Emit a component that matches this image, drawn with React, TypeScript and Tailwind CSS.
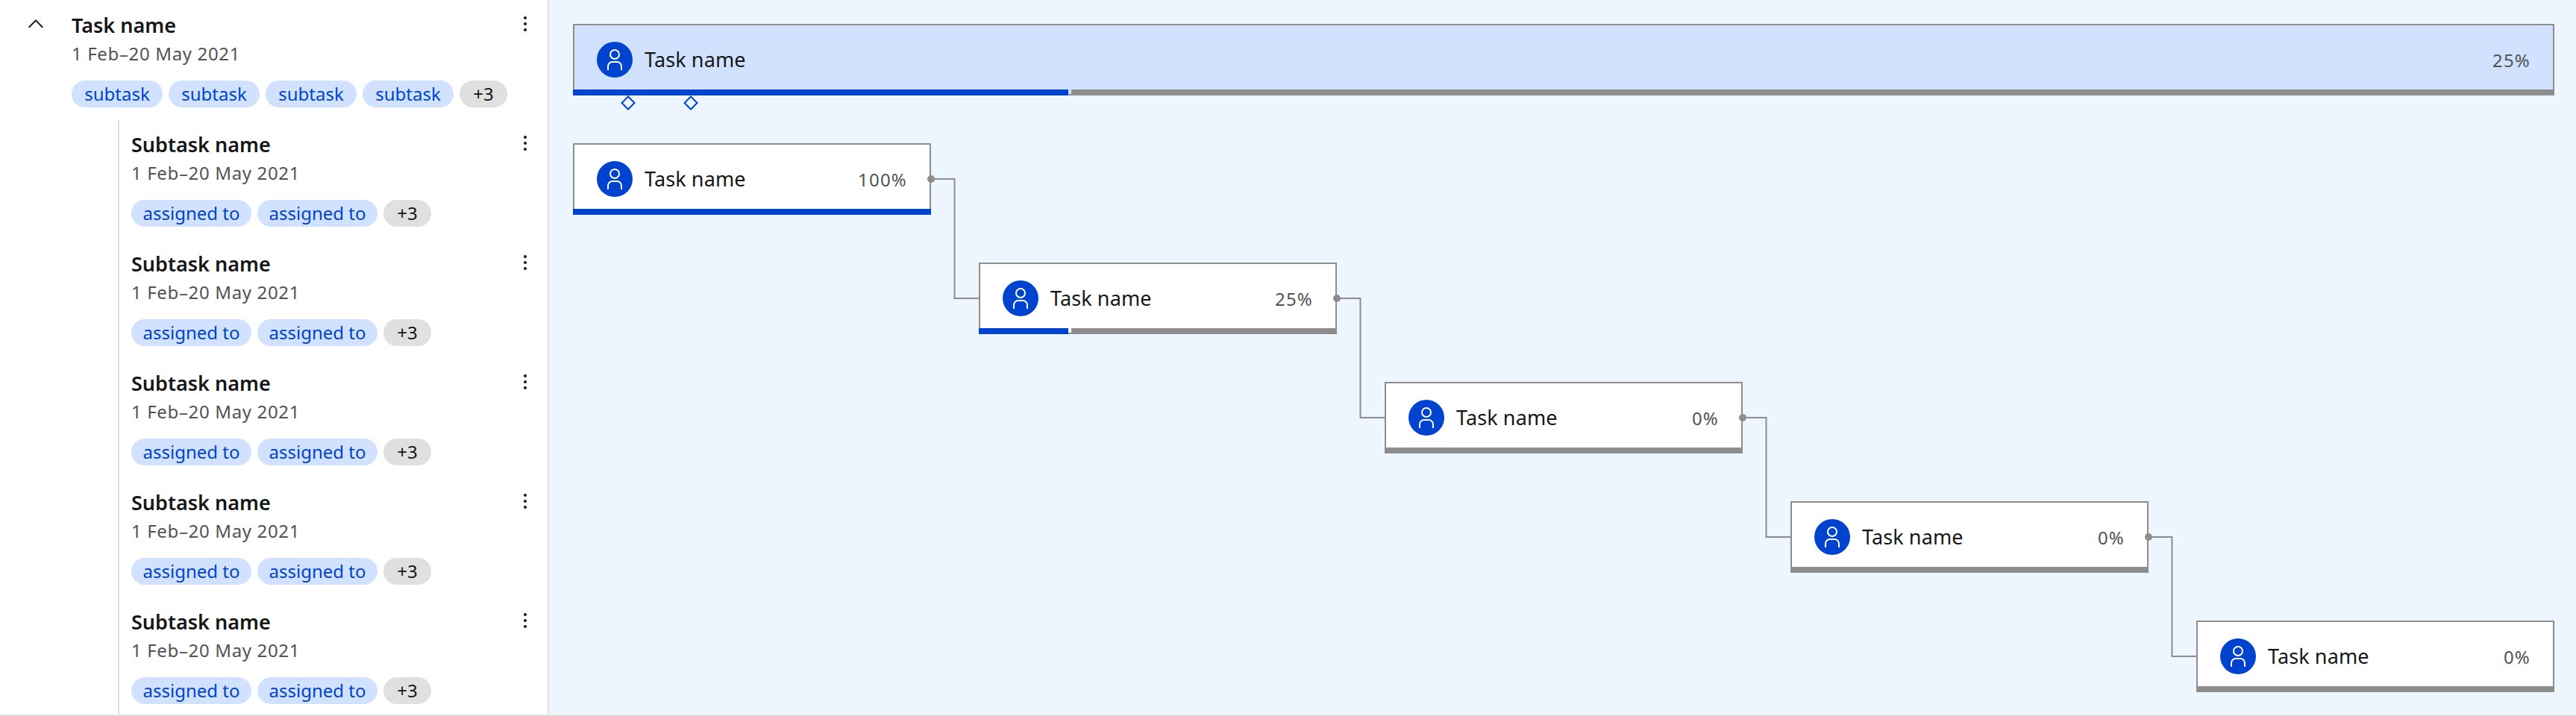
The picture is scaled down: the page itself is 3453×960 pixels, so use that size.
import React from 'react';

const SANS = 'font-["Noto_Sans",sans-serif]';

const subtasks = [0, 1, 2, 3, 4];

const MoreIcon = () => (
  <svg width="32" height="32" viewBox="0 0 32 32" fill="#161616" className="shrink-0">
    <circle cx="16" cy="8" r="2" />
    <circle cx="16" cy="16" r="2" />
    <circle cx="16" cy="24" r="2" />
  </svg>
);

const UserAvatar = () => (
  <div className="w-12 h-12 rounded-full bg-[#0043ce] flex items-center justify-center shrink-0">
    <svg width="32" height="32" viewBox="0 0 32 32" fill="#ffffff">
      <path d="M16,4a5,5,0,1,1-5,5,5,5,0,0,1,5-5m0-2a7,7,0,1,0,7,7A7,7,0,0,0,16,2Z" />
      <path d="M26,30H24V25a5,5,0,0,0-5-5H13a5,5,0,0,0-5,5v5H6V25a7,7,0,0,1,7-7h6a7,7,0,0,1,7,7Z" />
    </svg>
  </div>
);

const Chip: React.FC<{ label: string; className: string; muted?: boolean }> = ({ label, className, muted }) => (
  <span
    className={`h-9 rounded-[18px] flex items-center justify-center text-[24px] leading-none whitespace-nowrap ${className} ${
      muted ? 'bg-[#e0e0e0] text-[#161616]' : 'bg-[#d0e2ff] text-[#0043ce]'
    }`}
  >
    {label}
  </span>
);

const Diamond = () => (
  <svg width="20" height="20" viewBox="0 0 20 20" fill="none" stroke="#0043ce" strokeWidth="2">
    <path d="M10 1.5 18.5 10 10 18.5 1.5 10Z" />
  </svg>
);

const Title: React.FC<{ children: React.ReactNode }> = ({ children }) => (
  <div className="text-[27px] leading-9 font-semibold text-[#161616]">{children}</div>
);

const Dates = () => (
  <div className="text-[24px] leading-8 mt-1 tracking-[0.65px] text-[#525252]">1 Feb–20 May 2021</div>
);

const SubtaskRow = () => (
  <div className="h-40 pt-4 pl-4 flex justify-between">
    <div>
      <Title>Subtask name</Title>
      <Dates />
      <div className="flex gap-2 mt-5">
        <Chip label="assigned to" className="w-[161px]" />
        <Chip label="assigned to" className="w-[161px]" />
        <Chip label="+3" className="w-16" muted />
      </div>
    </div>
    <MoreIcon />
  </div>
);

const ProgressStrip: React.FC<{ pct: number }> = ({ pct }) => (
  <div className="absolute left-0 right-0 bottom-0 h-2 flex gap-1">
    {pct > 0 && <div className="bg-[#0043ce] h-full" style={{ width: `${pct}%` }} />}
    {pct < 100 && <div className="bg-[#8d8d8d] h-full flex-1" />}
  </div>
);

const BarBody: React.FC<{ pct: number; className: string }> = ({ pct, className }) => (
  <div className={`h-full border-2 border-[#8d8d8d] flex items-center justify-between px-[30px] ${className}`}>
    <div className="flex items-center gap-4">
      <UserAvatar />
      <span className="text-[27px] leading-9 tracking-[0.1px] text-[#161616]">Task name</span>
    </div>
    <span className="text-[24px] leading-8 tracking-[1.2px] mt-[1px] text-[#525252]">{pct}%</span>
  </div>
);

// gantt bar, pct decides how the bottom strip splits
const TaskBar: React.FC<{ pct: number; offset?: string; last?: boolean }> = ({ pct, offset = '', last }) => (
  <div className={`relative w-[480px] h-24 shrink-0 ${offset}`}>
    <BarBody pct={pct} className="bg-white" />
    <ProgressStrip pct={pct} />
    {!last && (
      <svg className="absolute left-[475px] top-[43px] overflow-visible" width="74" height="170" fill="none">
        <path d="M5 5H36.5V165H69" stroke="#8d8d8d" strokeWidth="2" />
        <circle cx="5" cy="5" r="5" fill="#8d8d8d" />
      </svg>
    )}
  </div>
);

export default function App() {
  return (
    <div className={`w-[3453px] h-[960px] flex border-b-2 border-[#e0e0e0] overflow-hidden ${SANS}`}>
      {/* task list */}
      <aside className="w-[736px] shrink-0 border-r-2 border-[#e0e0e0] bg-white pt-4 pr-[14px] flex flex-col">
        <div className="flex">
          <div className="w-[96px] pl-8 shrink-0">
            <svg width="32" height="32" viewBox="0 0 32 32" fill="#161616">
              <path d="M16 10 26 20 24.59 21.41 16 12.83 7.41 21.41 6 20 16 10z" />
            </svg>
          </div>
          <div className="flex-1 flex justify-between">
            <div>
              <Title>Task name</Title>
              <Dates />
              <div className="flex gap-2 mt-5">
                <Chip label="subtask" className="w-[122px]" />
                <Chip label="subtask" className="w-[122px]" />
                <Chip label="subtask" className="w-[122px]" />
                <Chip label="subtask" className="w-[122px]" />
                <Chip label="+3" className="w-16" muted />
              </div>
            </div>
            <MoreIcon />
          </div>
        </div>
        <div className="ml-[158px] mt-4 border-l-2 border-[#e0e0e0] flex-1">
          {subtasks.map((i) => (
            <SubtaskRow key={i} />
          ))}
        </div>
      </aside>

      {/* gantt canvas */}
      <main className="flex-1 bg-[#edf5ff] pl-8 pt-8 flex flex-col">
        <div className="relative w-[2656px] h-24 shrink-0">
          <BarBody pct={25} className="bg-[#d0e2ff]" />
          <ProgressStrip pct={25} />
          <div className="absolute top-full left-[64px] flex gap-[64px]">
            <Diamond />
            <Diamond />
          </div>
        </div>
        <div className="mt-16 flex flex-col gap-16">
          <TaskBar pct={100} />
          <TaskBar pct={25} offset="ml-[544px]" />
          <TaskBar pct={0} offset="ml-[1088px]" />
          <TaskBar pct={0} offset="ml-[1632px]" />
          <TaskBar pct={0} offset="ml-[2176px]" last />
        </div>
      </main>
    </div>
  );
}
